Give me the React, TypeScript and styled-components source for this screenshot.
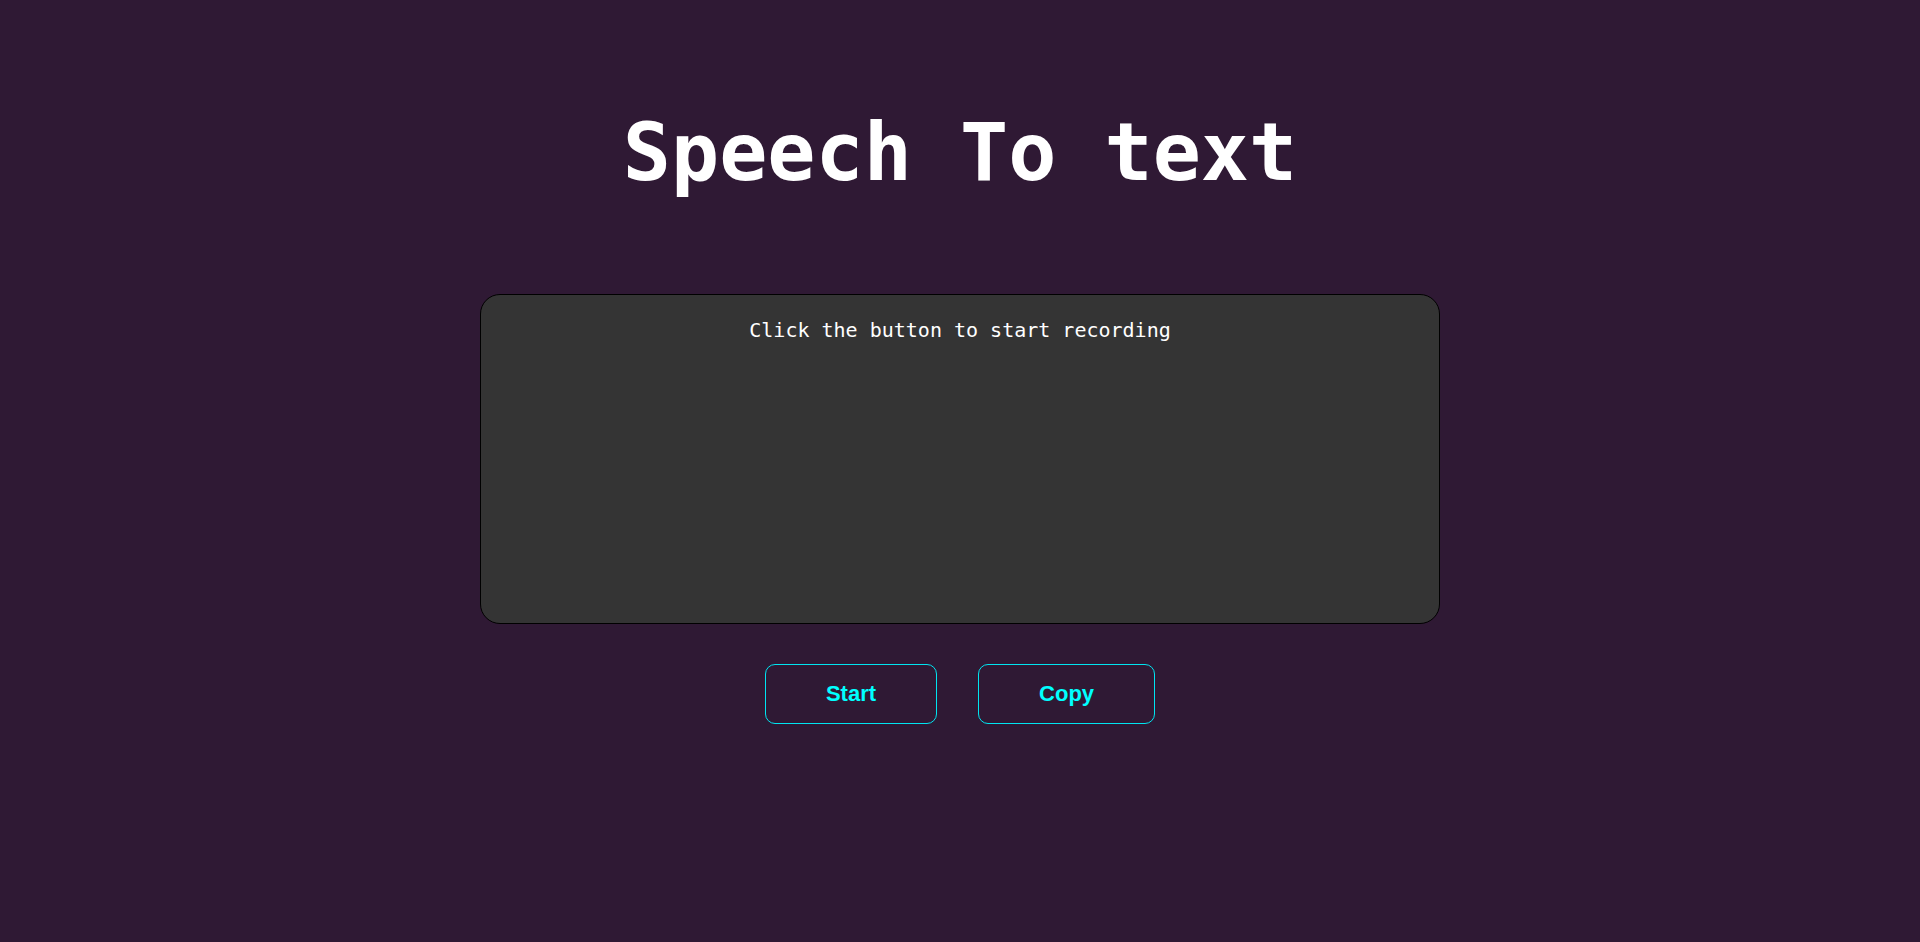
import React from "react";
import styled, { createGlobalStyle } from "styled-components";

const GlobalStyle = createGlobalStyle`
  html, body {
    margin: 0;
    padding: 0;
    background: #2f1934;
  }
  * { box-sizing: border-box; }
`;

const Page = styled.main`
  min-height: 100vh;
  display: flex;
  flex-direction: column;
  align-items: center;
  padding-top: 103px;
  background: #2f1934;
  font-family: "DejaVu Sans Mono", "Liberation Mono", monospace;
`;

const Title = styled.h1`
  margin: 0;
  font-size: 80px;
  line-height: 100px;
  font-weight: 700;
  color: #ffffff;
  letter-spacing: 0;
`;

const TranscriptBox = styled.div`
  margin-top: 91px;
  width: 960px;
  height: 330px;
  background: #343434;
  border: 1px solid #000000;
  border-radius: 20px;
  padding: 23px 20px;
  text-align: center;
  color: #ffffff;
  font-size: 20px;
  line-height: normal;
`;

const ButtonRow = styled.div`
  margin-top: 40px;
  display: flex;
  gap: 41px;
`;

const ActionButton = styled.button`
  height: 60px;
  padding: 0 60px;
  display: flex;
  align-items: center;
  justify-content: center;
  background: transparent;
  border: 1px solid #00e5f0;
  border-radius: 10px;
  color: #00ffff;
  font-family: "Liberation Sans", Arial, sans-serif;
  font-weight: 700;
  font-size: 22px;
  line-height: normal;
  cursor: pointer;
`;

export default function App() {
  return (
    <>
      <GlobalStyle />
      <Page>
        <Title>Speech To text</Title>
        <TranscriptBox>Click the button to start recording</TranscriptBox>
        <ButtonRow>
          <ActionButton>Start</ActionButton>
          <ActionButton>Copy</ActionButton>
        </ButtonRow>
      </Page>
    </>
  );
}
